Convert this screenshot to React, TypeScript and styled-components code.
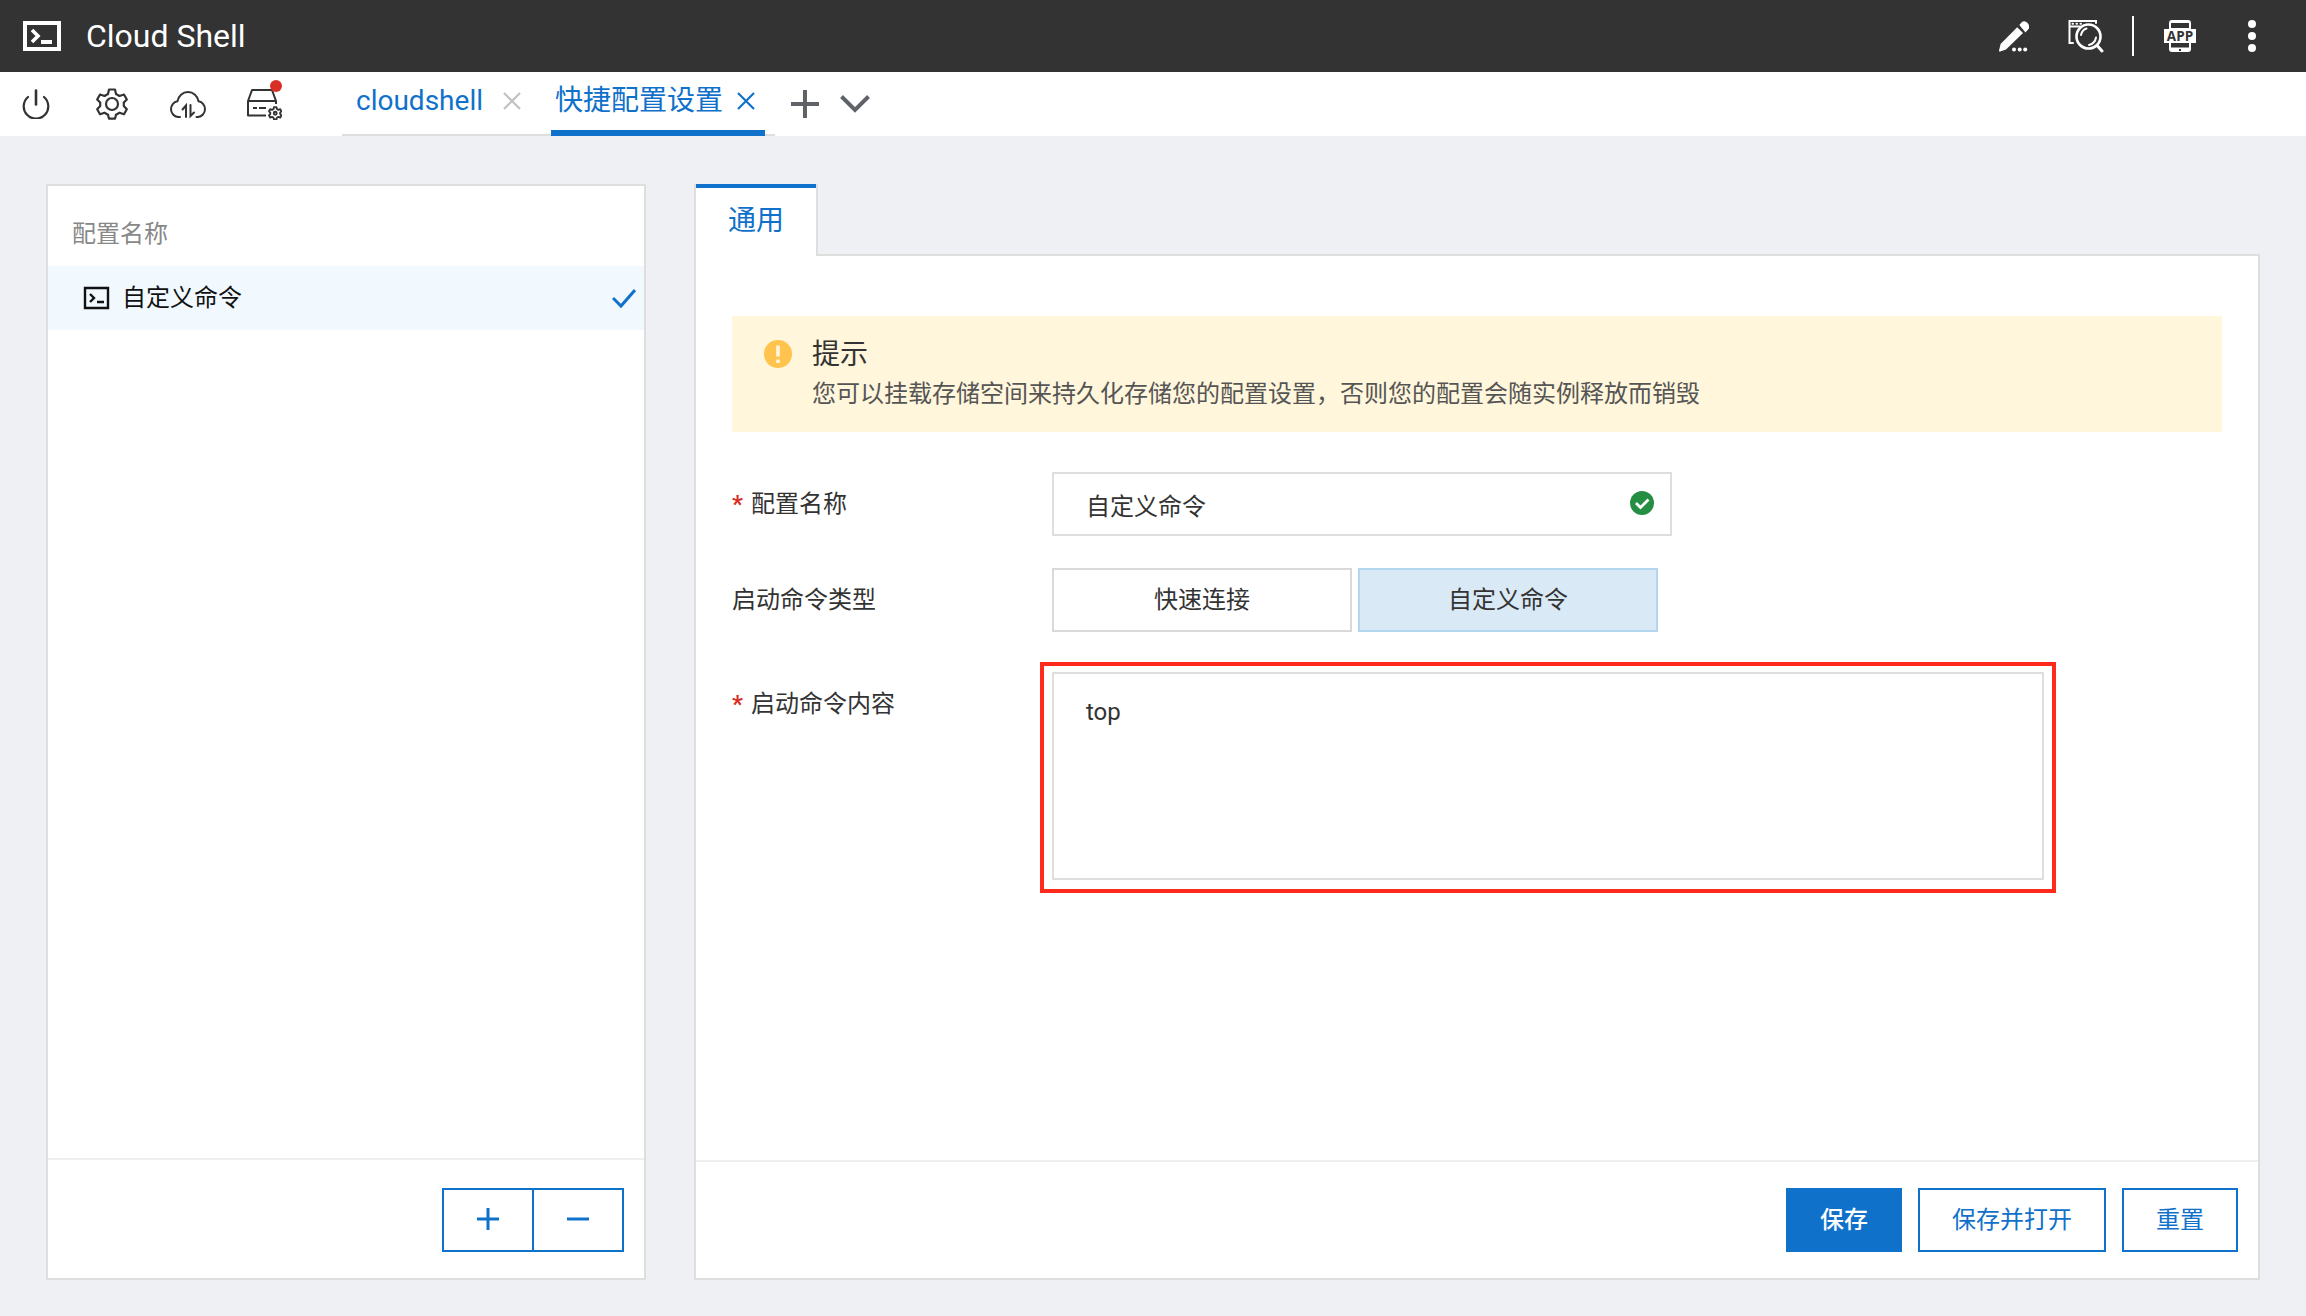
import React, { useState } from "react";
import styled, { createGlobalStyle } from "styled-components";

const blue = "#1071cb";
const line = "#dedede";

const Global = createGlobalStyle`
  *, *::before, *::after { box-sizing: border-box; }
  body {
    margin: 0;
    background: #eff0f4;
    color: #333;
    font-family: Roboto, "Noto Sans CJK SC", sans-serif;
    font-size: 24px;
    line-height: 36px;
  }
  button, input, textarea { font: inherit; color: inherit; margin: 0; }
  svg { display: block; flex: none; }
`;

const Page = styled.div`
  display: flex;
  flex-direction: column;
  min-height: 100vh;
`;

const Header = styled.header`
  display: flex;
  align-items: center;
  height: 72px;
  padding: 0 34px 0 22px;
  background: #333;
  color: #fff;
`;

const Title = styled.h1`
  margin: 0 auto 0 24px;
  font-size: 32px;
  font-weight: 400;
  line-height: 48px;
`;

const IconButton = styled.button`
  display: flex;
  align-items: center;
  justify-content: center;
  width: 40px;
  height: 40px;
  padding: 0;
  border: 0;
  background: none;
  color: inherit;
  cursor: pointer;
`;

const HeaderActions = styled.div`
  display: flex;
  align-items: center;
  gap: 32px;
`;

const HeaderRule = styled.span`
  width: 2px;
  height: 40px;
  margin: 0 -6px;
  background: #fff;
`;

const Toolbar = styled.nav`
  display: flex;
  height: 64px;
  padding-left: 16px;
  background: #fff;
`;

const Tools = styled.div`
  display: flex;
  align-items: center;
  gap: 36px;
  width: 326px;
`;

const ToolButton = styled(IconButton)`
  position: relative;
  color: #333;
`;

const Dot = styled.span`
  position: absolute;
  top: -4px;
  right: 2px;
  width: 12px;
  height: 12px;
  border-radius: 50%;
  background: #d93026;
`;

const TabStrip = styled.div`
  display: flex;
  padding-right: 10px;
  box-shadow: inset 0 -2px 0 ${line};
`;

const ShellTab = styled.div<{ $active?: boolean }>`
  display: flex;
  align-items: center;
  gap: ${(p) => (p.$active ? "14px" : "20px")};
  height: 64px;
  padding: ${(p) => (p.$active ? "0 10px 0 4px" : "0 30px 0 14px")};
  border-bottom: 6px solid ${(p) => (p.$active ? blue : "transparent")};
`;

const TabLabel = styled.button`
  padding: 0;
  border: 0;
  background: none;
  color: ${blue};
  font-size: 28px;
  line-height: 48px;
  cursor: pointer;
`;

const CloseButton = styled.button<{ $active?: boolean }>`
  padding: 0;
  border: 0;
  background: none;
  color: ${(p) => (p.$active ? blue : "#c1c1c1")};
  cursor: pointer;
`;

const TabTools = styled.div`
  display: flex;
  align-items: center;
  gap: 10px;
  padding-left: 10px;
  color: #5f6368;
`;

const Main = styled.main`
  display: flex;
  flex: 1;
  gap: 48px;
  padding: 48px 46px 36px;
`;

const Sidebar = styled.aside`
  display: flex;
  flex-direction: column;
  flex: 0 0 600px;
  border: 2px solid ${line};
  background: #fff;
`;

const SidebarTitle = styled.h2`
  margin: 0;
  padding: 30px 24px 14px;
  color: #888;
  font-size: 24px;
  font-weight: 400;
  line-height: 36px;
`;

const ProfileList = styled.ul`
  flex: 1;
  margin: 0;
  padding: 0;
  list-style: none;
`;

const ProfileButton = styled.button`
  display: flex;
  align-items: center;
  width: 100%;
  height: 64px;
  padding: 0 8px 0 35px;
  border: 0;
  background: #f1f9ff;
  color: #111;
  cursor: pointer;
`;

const ProfileName = styled.span`
  margin: 0 auto 0 12px;
`;

const SidebarFooter = styled.footer`
  display: flex;
  justify-content: flex-end;
  align-items: center;
  height: 120px;
  padding: 2px 20px 0;
  border-top: 2px solid #eee;
`;

const StepButton = styled.button`
  display: flex;
  align-items: center;
  justify-content: center;
  width: 92px;
  height: 64px;
  padding: 0;
  border: 2px solid ${blue};
  background: #fff;
  color: ${blue};
  cursor: pointer;

  & + & { margin-left: -2px; }
`;

const Content = styled.section`
  display: flex;
  flex-direction: column;
  flex: 1;
  min-width: 0;
`;

const PanelTab = styled.button`
  align-self: flex-start;
  width: 124px;
  height: 72px;
  margin-bottom: -2px;
  padding: 2px 0 0;
  border: 2px solid ${line};
  border-width: 0 2px;
  background: linear-gradient(${blue} 4px, #fff 4px);
  color: ${blue};
  font-size: 28px;
  line-height: 40px;
  cursor: pointer;
  z-index: 1;
`;

const Panel = styled.form`
  display: flex;
  flex-direction: column;
  flex: 1;
  border: 2px solid ${line};
  background: #fff;
`;

const PanelBody = styled.div`
  flex: 1;
  padding: 60px 36px 40px;
`;

const Notice = styled.div`
  display: flex;
  gap: 20px;
  margin-bottom: 40px;
  padding: 18px 32px 20px;
  background: #fff6db;
`;

const NoticeIcon = styled.div`
  padding-top: 6px;
`;

const NoticeTitle = styled.h3`
  margin: 0;
  font-size: 28px;
  font-weight: 400;
  line-height: 42px;
`;

const NoticeText = styled.p`
  margin: 0;
  color: #555;
`;

const Field = styled.div<{ $multiline?: boolean }>`
  display: flex;
  align-items: flex-start;
  margin-bottom: 32px;
  padding-top: ${(p) => (p.$multiline ? "8px" : "0")};
`;

const Label = styled.label`
  flex: 0 0 320px;
  line-height: 64px;
`;

const Required = styled.span`
  margin-right: 8px;
  color: #d93026;
  font-weight: 700;
`;

const InputWrap = styled.div`
  position: relative;
  flex: 0 1 620px;
`;

const TextInput = styled.input`
  display: block;
  width: 100%;
  height: 64px;
  padding: 0 60px 0 32px;
  border: 2px solid ${line};
  border-radius: 0;
  background: #fff;
  outline: none;
`;

const InputStatus = styled.span`
  position: absolute;
  top: 19px;
  right: 18px;
`;

const Choices = styled.div`
  display: flex;
  gap: 6px;
`;

const Choice = styled.button<{ $active?: boolean }>`
  width: 300px;
  height: 64px;
  padding: 0;
  border: 2px solid ${(p) => (p.$active ? "#b3d6ee" : "#d9d9d9")};
  background: ${(p) => (p.$active ? "#dae9f6" : "#fff")};
  cursor: pointer;
`;

const Highlight = styled.div`
  flex: 0 1 1016px;
  margin: -10px 0 0 -12px;
  padding: 6px 8px 9px;
  border: 4px solid #ff2a1c;
`;

const TextArea = styled.textarea`
  display: block;
  width: 100%;
  height: 208px;
  padding: 20px 32px;
  border: 2px solid ${line};
  border-radius: 0;
  background: #fff;
  outline: none;
  resize: none;
`;

const PanelFooter = styled.footer`
  display: flex;
  justify-content: flex-end;
  align-items: center;
  gap: 16px;
  height: 118px;
  padding: 0 20px;
  border-top: 2px solid #eee;
`;

const ActionButton = styled.button<{ $primary?: boolean }>`
  height: 64px;
  padding: 0 32px;
  border: 2px solid ${blue};
  background: ${(p) => (p.$primary ? blue : "#fff")};
  color: ${(p) => (p.$primary ? "#fff" : blue)};
  font-weight: ${(p) => (p.$primary ? 500 : 400)};
  cursor: pointer;
`;

const TerminalLogo = () => (
  <svg width="40" height="32" viewBox="0 0 40 32" fill="none" stroke="currentColor" strokeWidth="4">
    <path d="M3 3h34v26H3z" />
    <path d="M10 10l6 6-6 6" strokeWidth="3.6" />
    <path d="M19 22h11" />
  </svg>
);

const TerminalSmall = () => (
  <svg width="27" height="26" viewBox="0 0 27 26" fill="none" stroke="currentColor" strokeWidth="2.4">
    <path d="M2 3h23v20H2z" />
    <path d="M7 9l4 4-4 4M14 17h7" />
  </svg>
);

const PencilIcon = () => (
  <svg width="32" height="32" viewBox="0 0 32 32" fill="currentColor">
    <path d="M19.2 7.2l5.8 5.8L8 29.5 2.2 31.6Q1 31.9 1 30.6L2.6 24z" />
    <path d="M21.3 5l2.4-2.7a4 4 0 0 1 4.2-.5q4 2.4 3 6.6l-3.400 4z" />
    <circle cx="16" cy="29.5" r="2" />
    <circle cx="21.7" cy="29.5" r="2" />
    <circle cx="27.2" cy="29.5" r="2" />
  </svg>
);

const SearchWindowIcon = () => (
  <svg width="36" height="34" viewBox="0 0 36 34" fill="none" stroke="currentColor" strokeWidth="2" strokeLinecap="round">
    <path d="M28 4V2H1.5v22H5" />
    <path d="M2 7.5h10" />
    <path d="M4.5 4.8h.5M8.5 4.8h.5M12.500 4.800h.5" strokeWidth="2" />
    <circle cx="20.500" cy="17.500" r="12" strokeWidth="2.600" />
    <path d="M13 16q1-5 5.500-6.500M28 18.500q-1 6-7 7.500" />
    <path d="M29.500 27l4.500 5" strokeWidth="3" />
  </svg>
);

const AppIcon = () => (
  <svg width="32" height="34" viewBox="0 0 32 34" fill="currentColor">
    <path d="M8 1h16q3 0 3 3v6H5V4q0-3 3-3z" />
    <path d="M7 4h18v5H7z" fill="#333" />
    <path d="M0 10h32v14H0z" />
    <path d="M5 24h22v6q0 3-3 3H8q-3 0-3-3z" />
    <path d="M7 24h18v4.500H7zM15 30h2v2h-2z" fill="#333" />
    <text x="16" y="21.500" fill="#333" fontFamily="Open Sans, sans-serif" fontWeight="700" fontSize="13.500" textAnchor="middle">APP</text>
  </svg>
);

const MoreIcon = () => (
  <svg width="8" height="32" viewBox="0 0 8 32" fill="currentColor">
    <circle cx="4" cy="4" r="4" />
    <circle cx="4" cy="16" r="4" />
    <circle cx="4" cy="28" r="4" />
  </svg>
);

const PowerIcon = () => (
  <svg width="28" height="30" viewBox="0 0 28 30" fill="none" stroke="currentColor" strokeWidth="2.200" strokeLinecap="round">
    <path d="M14 1.500v14" strokeWidth="2.600" />
    <path d="M6 8a12.300 12.300 0 1 0 16 0" />
  </svg>
);

const gearPath =
  "M13 1.500h6l1 4.500 3.500 2 4.500-1.500 2.800 5-3 3v3.500l3 3.200-2.800 5-4.500-1.500-3.500 2-1 4H13l-1-4-3.500-2L4 26.200l-2.800-5 3-3.200v-3.500l-3-3 2.800-5L8.500 8 12 6z";

const GearIcon = () => (
  <svg width="32" height="32" viewBox="0 0 32 32" fill="none" stroke="currentColor" strokeWidth="2.200" strokeLinejoin="round">
    <circle cx="16" cy="16" r="6" />
    <path d={gearPath} />
  </svg>
);

const CloudIcon = () => (
  <svg width="38" height="30" viewBox="0 0 38 30" fill="none" stroke="currentColor" strokeWidth="2" strokeLinecap="round">
    <path d="M11 28H9A8 8 0 0 1 8.500 12.200 10.600 10.600 0 0 1 29.500 12.200 8 8 0 0 1 29 28h-1.500" />
    <path d="M13.500 20.500l3.500-4V28M21.500 16v11l3.500-3.500" />
  </svg>
);

const DiskIcon = () => (
  <svg width="36" height="32" viewBox="0 0 36 32" fill="none" stroke="currentColor" strokeWidth="2">
    <path d="M20 27.500H2V13L6 2h20l4 11v3M2 13h28" strokeLinejoin="round" />
    <path d="M7 20h4M13 20h7" />
    <g transform="translate(22.500 18.500) scale(.42)" strokeWidth="4.500" strokeLinejoin="round">
      <path d={gearPath} />
      <circle cx="16" cy="16" r="3.500" />
    </g>
  </svg>
);

const CloseIcon = () => (
  <svg width="18" height="18" viewBox="0 0 18 18" fill="none" stroke="currentColor" strokeWidth="2.200">
    <path d="M1 1l16 16M17 1L1 17" />
  </svg>
);

const AddTabIcon = () => (
  <svg width="28" height="28" viewBox="0 0 28 28" stroke="currentColor" strokeWidth="4">
    <path d="M0 14h28M14 0v28" />
  </svg>
);

const ChevronIcon = () => (
  <svg width="30" height="18" viewBox="0 0 30 18" fill="none" stroke="currentColor" strokeWidth="4">
    <path d="M1.500 1.500L15 15 28.500 1.500" />
  </svg>
);

const CheckIcon = () => (
  <svg width="24" height="22" viewBox="0 0 24 22" fill="none" stroke={blue} strokeWidth="3">
    <path d="M1 11l8 8L23 3" />
  </svg>
);

const WarningIcon = () => (
  <svg width="28" height="28" viewBox="0 0 28 28">
    <circle cx="14" cy="14" r="14" fill="#ffc34e" />
    <path d="M12.200 5.500h3.600v11h-3.600zM12.200 19.500h3.600V23h-3.600z" fill="#fff6db" />
  </svg>
);

const SuccessIcon = () => (
  <svg width="24" height="24" viewBox="0 0 24 24" fill="none">
    <circle cx="12" cy="12" r="12" fill="#248f42" />
    <path d="M6 12l4.500 4.500L18.500 8.500" stroke="#fff" strokeWidth="2.800" />
  </svg>
);

const PlusMinusIcon = ({ plus }: { plus?: boolean }) => (
  <svg width="22" height="24" viewBox="0 0 22 24" stroke="currentColor" strokeWidth="3">
    <path d={plus ? "M0 11h22M11 0v22" : "M0 11h22"} />
  </svg>
);

export default function App() {
  const [name, setName] = useState("自定义命令");
  const [command, setCommand] = useState("top");
  const [kind, setKind] = useState("自定义命令");

  return (
    <Page>
      <Global />
      <Header>
        <TerminalLogo />
        <Title>Cloud Shell</Title>
        <HeaderActions>
          <IconButton aria-label="编辑"><PencilIcon /></IconButton>
          <IconButton aria-label="搜索"><SearchWindowIcon /></IconButton>
          <HeaderRule />
          <IconButton aria-label="应用"><AppIcon /></IconButton>
          <IconButton aria-label="更多"><MoreIcon /></IconButton>
        </HeaderActions>
      </Header>
      <Toolbar>
        <Tools>
          <ToolButton aria-label="电源"><PowerIcon /></ToolButton>
          <ToolButton aria-label="设置"><GearIcon /></ToolButton>
          <ToolButton aria-label="上传下载"><CloudIcon /></ToolButton>
          <ToolButton aria-label="存储"><DiskIcon /><Dot /></ToolButton>
        </Tools>
        <TabStrip>
          <ShellTab>
            <TabLabel>cloudshell</TabLabel>
            <CloseButton aria-label="关闭"><CloseIcon /></CloseButton>
          </ShellTab>
          <ShellTab $active>
            <TabLabel>快捷配置设置</TabLabel>
            <CloseButton $active aria-label="关闭"><CloseIcon /></CloseButton>
          </ShellTab>
        </TabStrip>
        <TabTools>
          <IconButton aria-label="新建"><AddTabIcon /></IconButton>
          <IconButton aria-label="展开"><ChevronIcon /></IconButton>
        </TabTools>
      </Toolbar>
      <Main>
        <Sidebar>
          <SidebarTitle>配置名称</SidebarTitle>
          <ProfileList>
            <li>
              <ProfileButton>
                <TerminalSmall />
                <ProfileName>自定义命令</ProfileName>
                <CheckIcon />
              </ProfileButton>
            </li>
          </ProfileList>
          <SidebarFooter>
            <StepButton aria-label="添加"><PlusMinusIcon plus /></StepButton>
            <StepButton aria-label="删除"><PlusMinusIcon /></StepButton>
          </SidebarFooter>
        </Sidebar>
        <Content>
          <PanelTab>通用</PanelTab>
          <Panel onSubmit={(e) => e.preventDefault()}>
            <PanelBody>
              <Notice>
                <NoticeIcon><WarningIcon /></NoticeIcon>
                <div>
                  <NoticeTitle>提示</NoticeTitle>
                  <NoticeText>您可以挂载存储空间来持久化存储您的配置设置，否则您的配置会随实例释放而销毁</NoticeText>
                </div>
              </Notice>
              <Field>
                <Label htmlFor="name"><Required>*</Required>配置名称</Label>
                <InputWrap>
                  <TextInput id="name" value={name} onChange={(e) => setName(e.target.value)} />
                  <InputStatus><SuccessIcon /></InputStatus>
                </InputWrap>
              </Field>
              <Field>
                <Label as="span" id="kind">启动命令类型</Label>
                <Choices role="group" aria-labelledby="kind">
                  {["快速连接", "自定义命令"].map((k) => (
                    <Choice key={k} type="button" $active={k === kind} aria-pressed={k === kind} onClick={() => setKind(k)}>
                      {k}
                    </Choice>
                  ))}
                </Choices>
              </Field>
              <Field $multiline>
                <Label htmlFor="command"><Required>*</Required>启动命令内容</Label>
                <Highlight>
                  <TextArea id="command" value={command} onChange={(e) => setCommand(e.target.value)} />
                </Highlight>
              </Field>
            </PanelBody>
            <PanelFooter>
              <ActionButton $primary>保存</ActionButton>
              <ActionButton type="button">保存并打开</ActionButton>
              <ActionButton type="reset">重置</ActionButton>
            </PanelFooter>
          </Panel>
        </Content>
      </Main>
    </Page>
  );
}
